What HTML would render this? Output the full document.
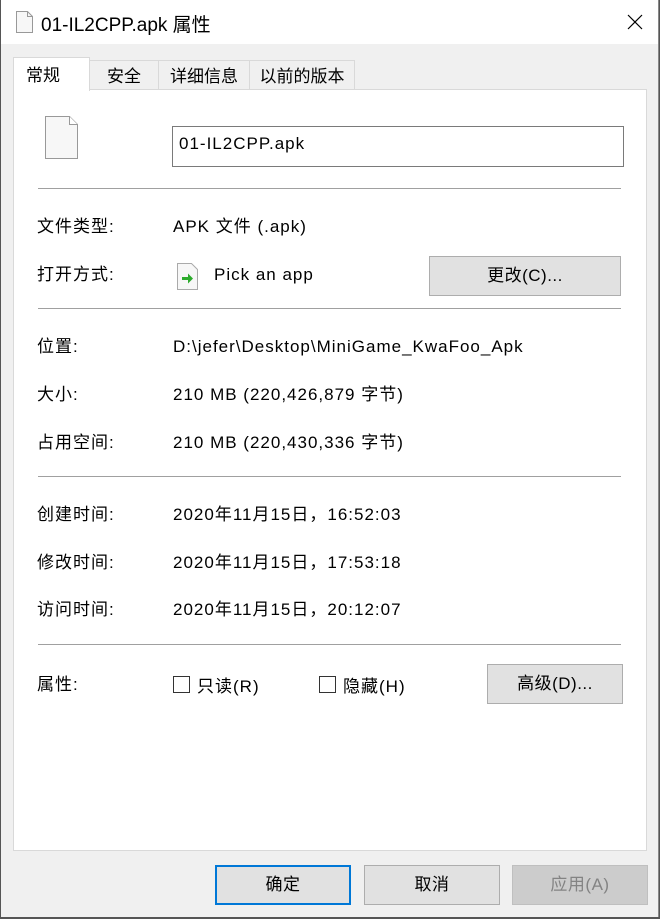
<!DOCTYPE html>
<html><head><meta charset="utf-8"><style>
body{margin:0;width:660px;height:919px;overflow:hidden;background:#555;font-family:"Liberation Sans","Noto Sans CJK SC",sans-serif;font-size:17px;color:#000}
.win{position:absolute;left:1px;top:0;width:657px;height:917px;background:#f0f0f0;border-right:1px solid #888}
.tb{position:absolute;left:0;top:0;width:657px;height:44px;background:#fff}
.abs{position:absolute;white-space:nowrap}
.t{line-height:20px;height:20px;letter-spacing:1px;margin-top:2px}
.panel{position:absolute;left:12px;top:89px;width:632px;height:760px;background:#fff;border:1px solid #d9d9d9}
.tab{position:absolute;top:60px;height:29px;background:#f0f0f0;border:1px solid #d9d9d9;border-bottom:none;box-sizing:border-box;text-align:center;line-height:32px}
.sep{position:absolute;left:37px;width:583px;height:1px;background:#a0a0a0}
.btn{position:absolute;background:#e1e1e1;border:1px solid #adadad;box-sizing:border-box;text-align:center;letter-spacing:0.5px}
.cb{position:absolute;width:17px;height:17px;border:1px solid #333;box-sizing:border-box;background:#fff}
</style></head><body>
<div class="win">
<div class="tb">
<svg class="abs" style="left:15px;top:11px" width="17" height="22"><path d="M0.5 0.5H11.5L16.5 5.5V21.5H0.5Z" fill="#f7f7f7" stroke="#999"/><path d="M11.5 0.5V5.5H16.5" fill="none" stroke="#999"/></svg>
<div class="abs" style="left:40px;top:10px;font-size:19px">01-IL2CPP.apk 属性</div>
<svg class="abs" style="left:626px;top:14px" width="16" height="16"><path d="M1 1L15 15M15 1L1 15" stroke="#000" stroke-width="1.2"/></svg>
</div>
<div class="panel"></div>
<div class="tab" style="left:88px;width:70px">安全</div>
<div class="tab" style="left:157px;width:92px">详细信息</div>
<div class="tab" style="left:248px;width:106px">以前的版本</div>
<div class="tab" style="left:12px;top:57px;width:77px;height:34px;background:#fff;line-height:36px;text-align:left;padding-left:12px">常规</div>

<svg class="abs" style="left:44px;top:116px" width="33" height="43"><path d="M0.5 0.5H24.5L32.5 8.5V42.5H0.5Z" fill="#f7f7f7" stroke="#999"/><path d="M24.5 0.5V8.5H32.5" fill="#fff" stroke="#999"/></svg>
<div class="abs" style="left:171px;top:126px;width:452px;height:41px;border:1px solid #7a7a7a;box-sizing:border-box;padding:7px 0 0 6px;line-height:20px;letter-spacing:1px">01-IL2CPP.apk</div>
<div class="sep" style="top:188px"></div>
<div class="abs t" style="left:36px;top:215px">文件类型:</div>
<div class="abs t" style="left:172px;top:215px">APK 文件 (.apk)</div>
<div class="abs t" style="left:36px;top:263px">打开方式:</div>
<svg class="abs" style="left:176px;top:263px" width="21" height="27"><path d="M0.5 0.5H14.5L20.5 6.5V26.5H0.5Z" fill="#f7f7f7" stroke="#aaa"/><path d="M5 14H11V10.5L16 15.5L11 20.5V17H5Z" fill="#2cab2c"/></svg>
<div class="abs t" style="left:213px;top:263px">Pick an app</div>
<div class="btn" style="left:428px;top:256px;width:192px;height:40px;line-height:38px">更改(C)...</div>
<div class="sep" style="top:308px"></div>
<div class="abs t" style="left:36px;top:335px">位置:</div>
<div class="abs t" style="left:172px;top:335px">D:\jefer\Desktop\MiniGame_KwaFoo_Apk</div>
<div class="abs t" style="left:36px;top:383px">大小:</div>
<div class="abs t" style="left:172px;top:383px">210 MB (220,426,879 字节)</div>
<div class="abs t" style="left:36px;top:431px">占用空间:</div>
<div class="abs t" style="left:172px;top:431px">210 MB (220,430,336 字节)</div>
<div class="sep" style="top:476px"></div>
<div class="abs t" style="left:36px;top:503px">创建时间:</div>
<div class="abs t" style="left:172px;top:503px">2020年11月15日，16:52:03</div>
<div class="abs t" style="left:36px;top:551px">修改时间:</div>
<div class="abs t" style="left:172px;top:551px">2020年11月15日，17:53:18</div>
<div class="abs t" style="left:36px;top:598px">访问时间:</div>
<div class="abs t" style="left:172px;top:598px">2020年11月15日，20:12:07</div>
<div class="sep" style="top:644px"></div>
<div class="abs t" style="left:36px;top:673px">属性:</div>
<div class="cb" style="left:172px;top:676px"></div>
<div class="abs t" style="left:196px;top:675px">只读(R)</div>
<div class="cb" style="left:318px;top:676px"></div>
<div class="abs t" style="left:342px;top:675px">隐藏(H)</div>
<div class="btn" style="left:486px;top:664px;width:136px;height:40px;line-height:38px">高级(D)...</div>

<div class="btn" style="left:214px;top:865px;width:136px;height:40px;line-height:36px;border:2px solid #0078d7">确定</div>
<div class="btn" style="left:363px;top:865px;width:136px;height:40px;line-height:38px">取消</div>
<div class="btn" style="left:511px;top:865px;width:136px;height:40px;line-height:38px;background:#ccc;border-color:#bfbfbf;color:#838383">应用(A)</div>
</div>
</body></html>
